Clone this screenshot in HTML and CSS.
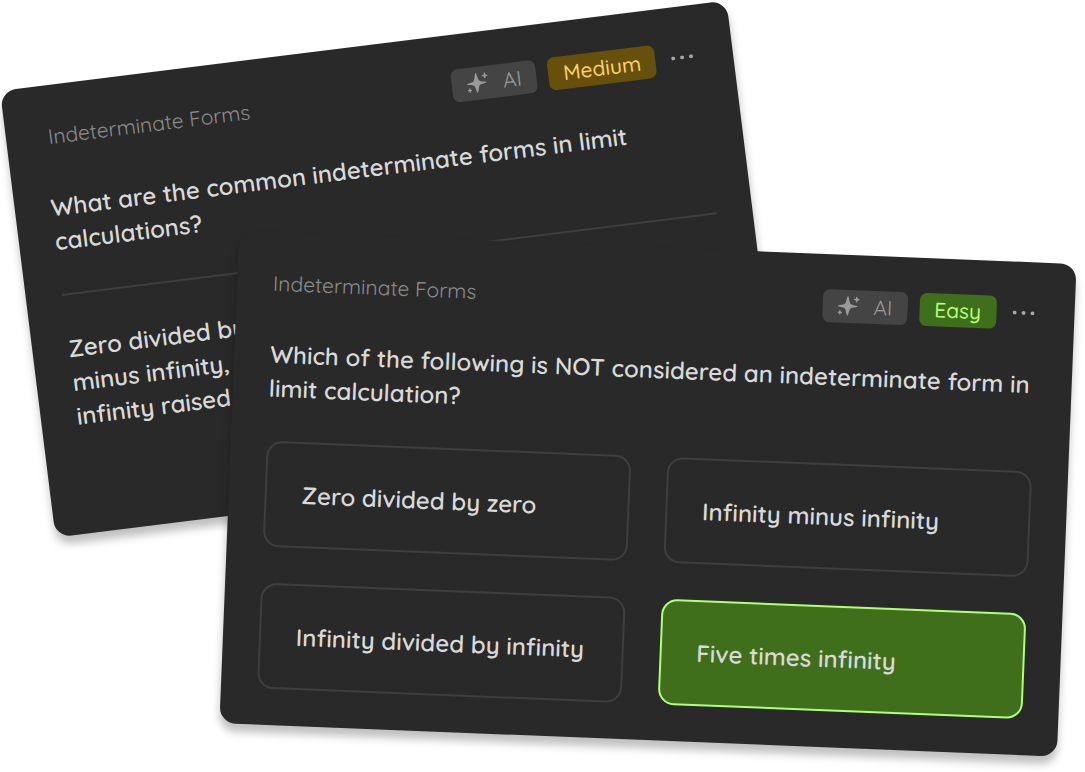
FILE: index.html
```html
<!DOCTYPE html>
<html lang="en">
<head>
    <meta charset="UTF-8">
    <meta name="viewport" content="width=device-width, initial-scale=1.0">
    <title>Indeterminate Forms</title>
    <link rel="stylesheet" href="styles.css">
</head>
<body>

    <!-- Flashcard -->
    <div class="card card-back">
        <div class="card-header">
            <span class="topic">Indeterminate Forms</span>
            <span class="badge badge-ai">
                <svg class="sparkle" viewBox="0 0 22 20" aria-hidden="true">
                    <path d="M10 0C11 0 11.500 7 13 8C14 9.300 20 9.300 20 10.300C20 11.300 14 11.300 13 12.500C11.500 13.700 11 20 10 20C9 20 8.500 13.700 7 12.500C6 11.300 0 11.300 0 10.300C0 9.300 6 9.300 7 8C8.500 7 9 0 10 0Z"/>
                    <path d="M18.300 0.500H19.300L19.700 2.600L21.500 3V4L19.700 4.400L19.300 6.200H18.300L17.900 4.400L16 4V3L17.900 2.600Z"/>
                    <path d="M2 14.500H2.800L3.200 16L4.500 16.400V17.200L3.200 17.600L2.800 19H2L1.600 17.600L0.200 17.200V16.400L1.600 16Z"/>
                </svg>
                AI
            </span>
            <span class="badge badge-medium">Medium</span>
            <button class="more" aria-label="More">
                <svg viewBox="0 0 22 4" aria-hidden="true"><circle cx="2" cy="2" r="2"/><circle cx="11" cy="2" r="2"/><circle cx="20" cy="2" r="2"/></svg>
            </button>
        </div>
        <p class="question">What are the common indeterminate forms in limit calculations?</p>
        <hr class="divider">
        <p class="answer">Zero divided by<br>minus infinity,<br>infinity raised</p>
    </div>

    <!-- Multiple choice card -->
    <div class="card card-front">
        <div class="card-header">
            <span class="topic">Indeterminate Forms</span>
            <span class="badge badge-ai">
                <svg class="sparkle" viewBox="0 0 22 20" aria-hidden="true">
                    <path d="M10 0C11 0 11.500 7 13 8C14 9.300 20 9.300 20 10.300C20 11.300 14 11.300 13 12.500C11.500 13.700 11 20 10 20C9 20 8.500 13.700 7 12.500C6 11.300 0 11.300 0 10.300C0 9.300 6 9.300 7 8C8.500 7 9 0 10 0Z"/>
                    <path d="M18.300 0.500H19.300L19.700 2.600L21.500 3V4L19.700 4.400L19.300 6.200H18.300L17.900 4.400L16 4V3L17.900 2.600Z"/>
                    <path d="M2 14.500H2.800L3.200 16L4.500 16.400V17.200L3.200 17.600L2.800 19H2L1.600 17.600L0.200 17.200V16.400L1.600 16Z"/>
                </svg>
                AI
            </span>
            <span class="badge badge-easy">Easy</span>
            <button class="more" aria-label="More">
                <svg viewBox="0 0 22 4" aria-hidden="true"><circle cx="2" cy="2" r="2"/><circle cx="11" cy="2" r="2"/><circle cx="20" cy="2" r="2"/></svg>
            </button>
        </div>
        <p class="question">Which of the following is NOT considered an indeterminate form in limit calculation?</p>
        <div class="options">
            <button class="option">Zero divided by zero</button>
            <button class="option">Infinity minus infinity</button>
            <button class="option">Infinity divided by infinity</button>
            <button class="option option-correct">Five times infinity</button>
        </div>
    </div>

</body>
</html>
```
FILE: styles.css
```css
* {
    box-sizing: border-box;
}

body {
    min-height: 100vh;
    margin: 0;
    padding-top: 44px;
    background-color: #fff;
    font-family: Quicksand, Lato, sans-serif;
    color: #d9d9d9;
}

button {
    font-family: inherit;
    cursor: pointer;
}

.card {
    padding: 35px 36px 36px;
    border-radius: 16px;
    background-color: #292929;
    box-shadow: 0 8px 8px rgba(0, 0, 0, 0.25);
}

.card-back {
    width: 67.5%;
    min-height: 450px;
    margin-left: 25px;
    transform: rotate(-7.1deg);
}

.card-front {
    width: 77.2%;
    margin: -247px 18px 0 auto;
    transform: rotate(2.3deg);
}

.card-header {
    display: flex;
    align-items: center;
    gap: 12px;
    height: 32px;
}

.topic {
    margin-right: auto;
    font-size: 21px;
    font-weight: 400;
    color: #8c8c8c;
}

.card-back .topic {
    padding-left: 6px;
}

.badge {
    display: flex;
    align-items: center;
    height: 33px;
    padding: 0 15px;
    border-radius: 7px;
    font-size: 21px;
    font-weight: 500;
}

.badge-ai {
    gap: 14px;
    background-color: #444;
    font-weight: 400;
    color: #9a9a9a;
}

.badge-medium {
    background-color: #66500c;
    color: #ffd066;
}

.badge-easy {
    background-color: #3f6f1a;
    color: #b0ff7a;
}

.sparkle {
    width: 22px;
    height: 20px;
    fill: #9a9a9a;
}

.more {
    display: flex;
    padding: 4px;
    border: none;
    background: none;
}

.more svg {
    width: 22px;
    height: 4px;
    fill: #a8a8a8;
}

.question,
.answer {
    margin: 0;
    font-size: 24px;
    font-weight: 600;
    line-height: 34px;
}

.question {
    margin-top: 38px;
}

.divider {
    height: 2px;
    margin: 36px 0;
    border: none;
    background-color: #3f3f3f;
}

.options {
    display: grid;
    grid-template-columns: 1fr 1fr;
    gap: 36px;
    margin-top: 36px;
}

.option {
    height: 106px;
    padding: 0 35px;
    border: 2px solid #3f3f3f;
    border-radius: 16px;
    background-color: transparent;
    font-size: 24px;
    font-weight: 600;
    text-align: left;
    color: #d9d9d9;
}

.option-correct {
    border-color: #b0ff7a;
    background-color: #3f6f1a;
}
```
